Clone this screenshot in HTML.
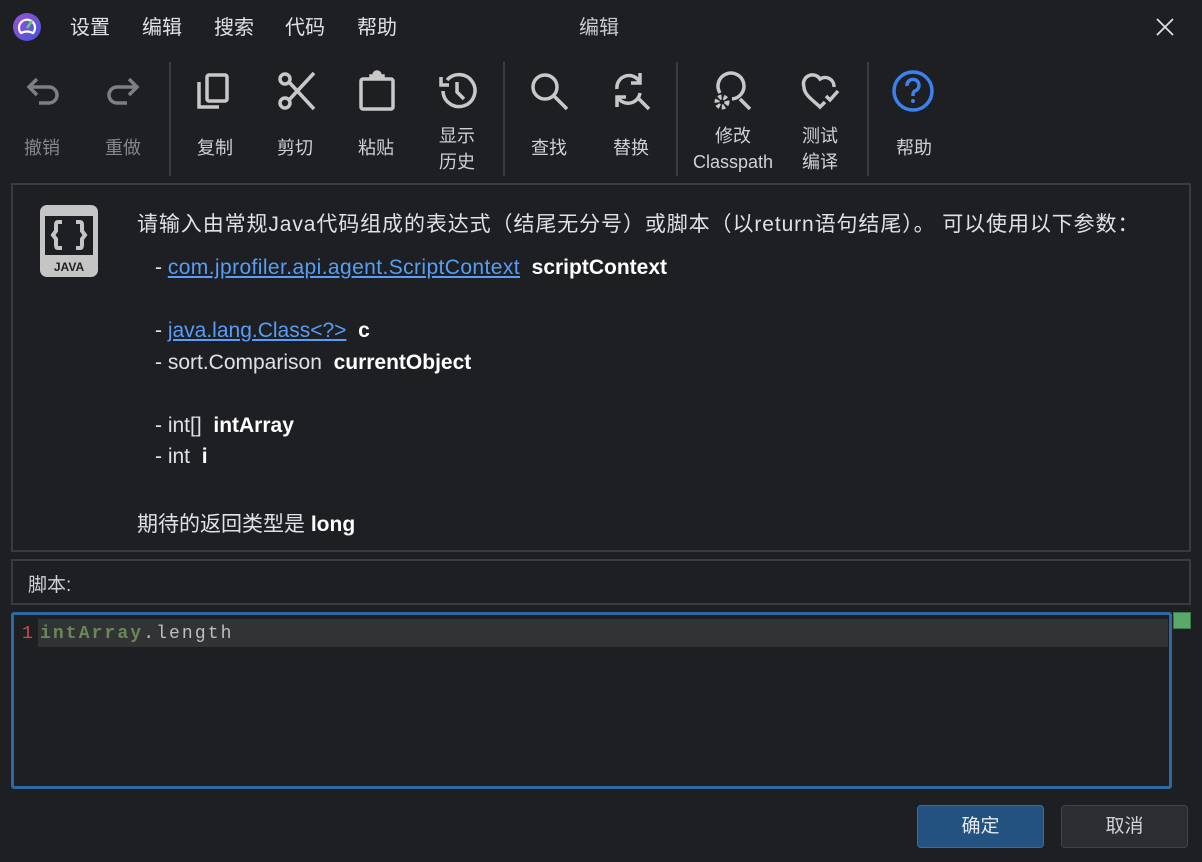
<!DOCTYPE html>
<html><head><meta charset="utf-8"><style>
*{margin:0;padding:0;box-sizing:border-box}
body{width:1202px;height:862px;background:#1e1f22;font-family:"Liberation Sans","Noto Sans CJK SC",sans-serif;color:#dfe1e5;position:relative;overflow:hidden}
.a{position:absolute;white-space:nowrap}
.menu{font-size:20px;color:#dfe1e5;top:11px}
.lbl{font-size:18px;color:#cfd1d5;text-align:center;line-height:26px}
.dis{color:#85878a}
.sep{position:absolute;top:62px;width:2px;height:114px;background:#393b40}
svg.i{position:absolute;width:44px;height:44px;top:69px}
.t{font-size:21px;color:#dfe1e5}
a{color:#589df6;text-decoration:underline}
b{color:#fff}
</style></head><body>
<svg class="a" style="left:13px;top:13px" width="28" height="28" viewBox="0 0 28 28"><defs><linearGradient id="g" x1="0" y1="0" x2="1" y2="1"><stop offset="0" stop-color="#a24fd6"/><stop offset="1" stop-color="#3f57d8"/></linearGradient></defs><circle cx="14" cy="14" r="14" fill="url(#g)"/><path d="M8 20 A8 8 0 1 1 20 20 Q14 17 8 20Z" fill="none" stroke="#fff" stroke-width="2.2"/><path d="M14 15 L19 8" stroke="#5fd068" stroke-width="2.5"/></svg>
<div class="a menu" style="left:70px">设置</div>
<div class="a menu" style="left:142px">编辑</div>
<div class="a menu" style="left:214px">搜索</div>
<div class="a menu" style="left:285px">代码</div>
<div class="a menu" style="left:357px">帮助</div>
<div class="a menu" style="left:579px;color:#c8cacd">编辑</div>
<svg class="a" style="left:1155px;top:17px" width="20" height="20" viewBox="0 0 20 20"><path d="M2 2L18 18M18 2L2 18" stroke="#dfe1e5" stroke-width="1.8"/></svg>

<svg class="i" style="left:21px" viewBox="0 0 44 44" fill="none" stroke="#7e7f82" stroke-width="3.5"><path d="M16 10L8 18L16 26"/><path d="M8 18H28A8 8 0 0 1 28 34H18"/></svg>
<svg class="i" style="left:101px" viewBox="0 0 44 44" fill="none" stroke="#7e7f82" stroke-width="3.5"><path d="M28 10L36 18L28 26"/><path d="M36 18H16A8 8 0 0 0 16 34H26"/></svg>
<div class="sep" style="left:169px"></div>
<svg class="i" style="left:193px" viewBox="0 0 44 44" fill="none" stroke="#c8c8c8" stroke-width="3.5"><rect x="14" y="6" width="20" height="26" rx="2"/><path d="M6 13V38H26"/></svg>
<svg class="i" style="left:274px" viewBox="0 0 44 44" fill="none" stroke="#c8c8c8" stroke-width="3.5"><circle cx="11" cy="10" r="5"/><circle cx="11" cy="34" r="5"/><path d="M15 13L40 40M15 31L40 4"/></svg>
<svg class="i" style="left:355px" viewBox="0 0 44 44" fill="none" stroke="#c8c8c8" stroke-width="3.5"><rect x="6" y="10" width="32" height="30" rx="2"/><path d="M16 10V7H28V10" fill="#c8c8c8"/><circle cx="22" cy="6" r="3" fill="#c8c8c8"/></svg>
<svg class="i" style="left:435px" viewBox="0 0 44 44" fill="none" stroke="#c8c8c8" stroke-width="3.5"><path d="M8 22A16 16 0 1 0 12 11"/><path d="M6 8V16H14"/><path d="M22 13V23L29 30"/></svg>
<div class="sep" style="left:503px"></div>
<svg class="i" style="left:527px" viewBox="0 0 44 44" fill="none" stroke="#c8c8c8" stroke-width="3.5"><circle cx="18" cy="18" r="12"/><path d="M27 27L40 40"/></svg>
<svg class="i" style="left:609px" viewBox="0 0 44 44" fill="none" stroke="#c8c8c8" stroke-width="3.5"><path d="M8 20A12 12 0 0 1 30 12"/><path d="M31 4V14H22" /><path d="M31 24A12 12 0 0 1 10 30"/><path d="M8 38V28H17"/><path d="M30 30L40 40"/></svg>
<div class="sep" style="left:676px"></div>
<svg class="i" style="left:710px" viewBox="0 0 44 44" fill="none" stroke="#c8c8c8" stroke-width="3.5"><path d="M10 24A13 13 0 1 1 22 30"/><path d="M30 30L40 40"/><circle cx="12" cy="33" r="5" stroke-width="5" stroke-dasharray="3 2"/><circle cx="12" cy="33" r="2" fill="#1e1f22" stroke="none"/></svg>
<svg class="i" style="left:798px" viewBox="0 0 44 44" fill="none" stroke="#c8c8c8" stroke-width="3.5"><path d="M36 18A9 9 0 0 0 22 10A9 9 0 0 0 6 18C6 26 16 32 22 38L27 33"/><path d="M28 27L32 31L40 22"/></svg>
<div class="sep" style="left:867px"></div>
<svg class="i" style="left:891px" viewBox="0 0 44 44" fill="none" stroke="#3b82f0" stroke-width="3.5"><circle cx="22" cy="22" r="19"/><path d="M16 17A6 6 0 1 1 24 22Q22 23 22 26V27"/><circle cx="22" cy="32" r="2" fill="#3b82f0" stroke="none"/></svg>

<div class="a lbl dis" style="left:24px;top:135px">撤销</div>
<div class="a lbl dis" style="left:105px;top:135px">重做</div>
<div class="a lbl" style="left:197px;top:135px">复制</div>
<div class="a lbl" style="left:277px;top:135px">剪切</div>
<div class="a lbl" style="left:358px;top:135px">粘贴</div>
<div class="a lbl" style="left:439px;top:123px">显示<br>历史</div>
<div class="a lbl" style="left:531px;top:135px">查找</div>
<div class="a lbl" style="left:613px;top:135px">替换</div>
<div class="a lbl" style="left:690px;top:123px;width:86px">修改<br>Classpath</div>
<div class="a lbl" style="left:802px;top:123px">测试<br>编译</div>
<div class="a lbl" style="left:896px;top:135px">帮助</div>

<div class="a" style="left:11px;top:183px;width:1180px;height:369px;border:2px solid #393b40"></div>
<svg class="a" style="left:40px;top:205px" width="58" height="72" viewBox="0 0 58 72"><rect width="58" height="72" rx="7" fill="#c5c5c5"/><rect x="5" y="11" width="48" height="39" fill="#1e1f22"/><path d="M22 17H18Q16 17 16 20V26L13 30L16 34V40Q16 43 18 43H22M36 17H40Q42 17 42 20V26L45 30L42 34V40Q42 43 40 43H36" fill="none" stroke="#c5c5c5" stroke-width="4"/><text x="29" y="66" text-anchor="middle" font-family="Liberation Sans" font-weight="bold" font-size="12" fill="#1e1f22">JAVA</text></svg>
<div class="a t" style="left:137px;top:208px;letter-spacing:0.9px">请输入由常规Java代码组成的表达式（结尾无分号）或脚本（以return语句结尾）。 可以使用以下参数：</div>
<div class="a t" style="left:155px;top:256px">- <a style="letter-spacing:0.4px">com.jprofiler.api.agent.ScriptContext</a>&nbsp; <b>scriptContext</b></div>
<div class="a t" style="left:155px;top:319px">- <a>java.lang.Class&lt;?&gt;</a>&nbsp; <b>c</b></div>
<div class="a t" style="left:155px;top:351px">- sort.Comparison&nbsp; <b>currentObject</b></div>
<div class="a t" style="left:155px;top:414px">- int[]&nbsp; <b>intArray</b></div>
<div class="a t" style="left:155px;top:445px">- int&nbsp; <b>i</b></div>
<div class="a t" style="left:137px;top:508px">期待的返回类型是 <b>long</b></div>

<div class="a" style="left:11px;top:559px;width:1180px;height:46px;border:2px solid #393b40"></div>
<div class="a" style="left:28px;top:570px;font-size:19px;color:#cfd1d5">脚本:</div>

<div class="a" style="left:11px;top:612px;width:1161px;height:177px;border:3px solid #2d6aa5;border-radius:3px;background:#1e1f22"></div>
<div class="a" style="left:38px;top:619px;width:1130px;height:28px;background:#323335"></div>
<div class="a" style="left:22px;top:624px;font-family:'Liberation Mono',monospace;font-size:18px;color:#c94f4f">1</div>
<div class="a" style="left:40px;top:624px;font-family:'Liberation Mono',monospace;font-size:18px;letter-spacing:2.1px;color:#bcbec4"><span style="color:#6a8759;font-weight:bold">intArray</span>.length</div>
<div class="a" style="left:1173px;top:612px;width:18px;height:17px;background:#5aa86a;border:1px solid #3d7a4e"></div>

<div class="a" style="left:917px;top:805px;width:127px;height:43px;background:#22527f;border:1px solid #3d6d9a;border-radius:4px;font-size:19px;color:#e6e8eb;text-align:center;line-height:41px">确定</div>
<div class="a" style="left:1061px;top:805px;width:127px;height:43px;background:#2b2d30;border:1px solid #404246;border-radius:4px;font-size:19px;color:#d0d2d5;text-align:center;line-height:41px">取消</div>
</body></html>
